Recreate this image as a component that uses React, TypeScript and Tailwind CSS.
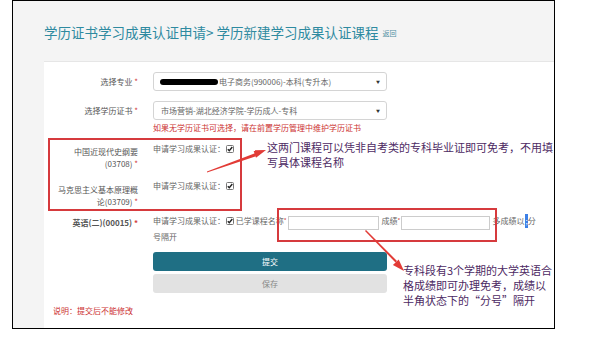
import React from 'react';

const Req = () => <span className="text-[#d03c3c]"> *</span>;

const Check = () => (
  <svg className="inline-block ml-[1px] align-[-1px]" width="8" height="8" viewBox="0 0 8 8">
    <rect x="0.5" y="0.5" width="7" height="7" rx="1" fill="#fff" stroke="#777" />
    <path d="M1.8 4.2 L3.3 5.8 L6.3 2" fill="none" stroke="#222" strokeWidth="1.4" />
  </svg>
);

const Row = ({ label, labelClass, children, className }: { label: React.ReactNode; labelClass?: string; children: React.ReactNode; className?: string }) => (
  <div className={`flex ${className ?? ''}`}>
    <div className={`w-[94px] shrink-0 text-right text-[8px] leading-[12px] text-[#555] ${labelClass ?? ''}`}>{label}</div>
    <div className="ml-[15px] w-[234px] shrink-0 text-[8px] leading-[12px] text-[#666]">{children}</div>
  </div>
);

const Select = ({ children }: { children: React.ReactNode }) => (
  <div className="h-[19px] border border-[#d4d4d4] rounded-[3px] bg-white flex items-center justify-between pl-[6px] pr-[6px] text-[8px] text-[#666]">
    <div className="flex items-center whitespace-nowrap">{children}</div>
    <span className="text-[4px] text-[#333]">▼</span>
  </div>
);

export default function App() {
  return (
    <div className="w-[589px] h-[339px] bg-white relative font-['Noto_Sans_CJK_SC','Noto_Sans',sans-serif]">
      <div className="ml-[12px] w-[543px] h-[329px] border border-black bg-[#f4f4f4] flex flex-col">
        {/* header */}
        <div className="h-[60px] shrink-0 pl-[31px] pt-[2px] flex items-center whitespace-nowrap">
          <span className="text-[13.5px] text-[#2e8aa0]">学历证书学习成果认证申请&gt; 学历新建学习成果认证课程</span>
          <span className="ml-[4px] mt-[3px] text-[7px] text-[#4f8ea2]">返回</span>
        </div>

        {/* form panel */}
        <div className="ml-[31px] flex-1 bg-white border-t border-[#e6e6e6] pt-[10px]">
          <Row label={<span>选择专业<Req /></span>} labelClass="pt-[4px]">
            <Select>
              <span className="inline-block w-[58px] h-[6px] rounded-full bg-black mr-[1px]" />
              <span>电子商务(990006)-本科(专升本)</span>
            </Select>
          </Row>

          <Row label={<span>选择学历证书<Req /></span>} labelClass="pt-[4px]" className="mt-[10px]">
            <Select>
              <span className="pl-[1px]">市场营销-湖北经济学院-学历成人-专科</span>
            </Select>
            <div className="mt-[2px] text-[#cc3131] whitespace-nowrap">如果无学历证书可选择，请在前置学历管理中维护学历证书</div>
          </Row>

          <Row
            label={<>中国近现代史纲要<br />(03708)<Req /></>}
            labelClass="pt-[3px]"
            className="mt-[9px]"
          >
            <div className="whitespace-nowrap">申请学习成果认证：<Check /></div>
          </Row>

          <Row
            label={<>马克思主义基本原理概<br />论(03709)<Req /></>}
            labelClass="pt-[4px] leading-[12.5px]"
            className="mt-[10px]"
          >
            <div className="whitespace-nowrap">申请学习成果认证：<Check /></div>
          </Row>

          <Row label={<span className="font-semibold">英语(二)(00015)<Req /></span>} labelClass="pt-[6px]" className="mt-[3px]">
            <div className="flex items-start h-[20px] whitespace-nowrap">
              <span className="mt-[4px]">申请学习成果认证：<Check /> 已学课程名称<span className="text-[#d03c3c] text-[6px] align-top">*</span></span>
              <span className="mt-[5px] ml-[1px] w-[91px] h-[14px] border border-[#ccc] bg-white shrink-0" />
              <span className="mt-[4px] ml-[3px]">成绩<span className="text-[#d03c3c] text-[6px] align-top">*</span></span>
              <span className="mt-[5px] ml-[1px] w-[89px] h-[14px] border border-[#ccc] bg-white shrink-0" />
              <span className="mt-[4px] ml-[2px]">多成绩以</span>
              <span className="mt-[3px] ml-[1px] h-[14px] w-[8px] bg-[#3d80e6] text-white text-center leading-[14px]">;</span>
              <span className="mt-[4px]">分</span>
            </div>
            <div>号隔开</div>
            <div className="mt-[9px] h-[19px] rounded-[3px] bg-[#1f6f84] flex items-center justify-center text-white">提交</div>
            <div className="mt-[3px] h-[19px] rounded-[3px] bg-[#e2e2e2] flex items-center justify-center text-[#888]">保存</div>
          </Row>

          <div className="mt-[12px] pl-[9px] text-[8px] leading-[12px] text-[#cc3131]">说明：提交后不能修改</div>
        </div>
      </div>

      {/* annotations drawn over the screenshot */}
      <div className="absolute left-[48px] top-[138px] w-[194px] h-[73px] border-2 border-[#d63a3d]" />
      <div className="absolute left-[277px] top-[208px] w-[220px] h-[34px] border-2 border-[#d63a3d]" />

      <svg className="absolute left-0 top-0 pointer-events-none" width="589" height="339" viewBox="0 0 589 339">
        <polygon points="207,171.5 255,153.2 256,156.2 207,172.5" fill="#e23b36" />
        <polygon points="266,150 253.4,150.2 256.0,157.8" fill="#e23b36" />
        <polygon points="366,230 397,261 395.5,262.5 365,231" fill="#e23b36" />
        <polygon points="404,271 392.9,264.9 398.7,259.5" fill="#e23b36" />
      </svg>

      <div className="absolute left-[267px] top-[140px] text-[11px] leading-[15px] text-[#4d2a63] whitespace-nowrap">
        这两门课程可以凭非自考类的专科毕业证即可免考，不用填<br />写具体课程名称
      </div>
      <div className="absolute left-[403px] top-[263px] text-[11px] leading-[15px] text-[#4d2a63] whitespace-nowrap">
        专科段有3个学期的大学英语合<br />格成绩即可办理免考，成绩以<br />半角状态下的“分号”隔开
      </div>
    </div>
  );
}
